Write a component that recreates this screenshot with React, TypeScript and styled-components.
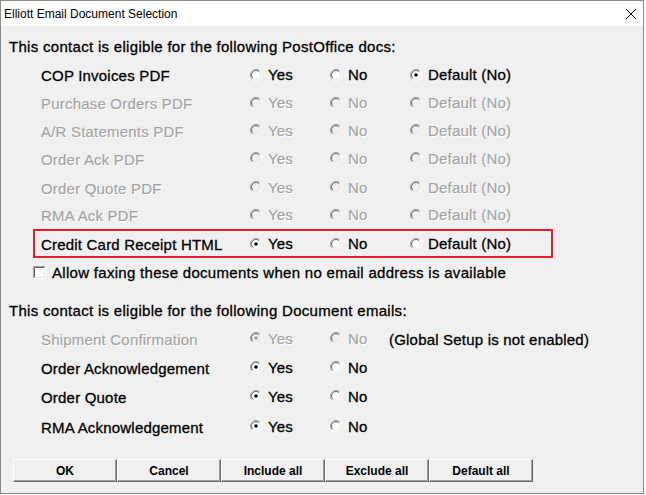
import React from 'react'
import styled, { createGlobalStyle } from 'styled-components'

const GlobalStyle = createGlobalStyle`
  html, body { margin: 0; padding: 0; background: #fff; }
  body { font-family: 'Liberation Sans', Arial, sans-serif; }
`

const Window = styled.div`
  width: 644px;
  height: 494px;
  box-sizing: border-box;
  border: 1px solid #8a8a8a;
  background: #f0f0f0;
  display: flex;
  flex-direction: column;
`

const TitleBar = styled.div`
  height: 25px;
  flex-shrink: 0;
  background: #fff;
  display: flex;
  align-items: center;
  justify-content: space-between;
  padding: 0 7px 0 3px;
  font-size: 12px;
  color: #000;
`

const Body = styled.div`
  padding: 6px 0 0 8px;
  display: flex;
  flex-direction: column;
  font-size: 15px;
  letter-spacing: 0.2px;
  color: #000;
  -webkit-text-stroke: 0.3px;
`

const Heading = styled.div<{ $mt?: number }>`
  height: 28px;
  margin-top: ${p => p.$mt || 0}px;
  display: flex;
  align-items: center;
  letter-spacing: 0.3px;
`

const Section = styled.div`
  margin-left: 24px;
  display: flex;
  flex-direction: column;
`

const Row = styled.div<{ $h: number; $cols: string; $boxed?: boolean }>`
  height: ${p => p.$h}px;
  box-sizing: border-box;
  display: grid;
  grid-template-columns: ${p => p.$cols};
  align-items: center;
  padding-left: ${p => (p.$boxed ? 6 : 8)}px;
  ${p => p.$boxed && `
    width: 520px;
    margin-top: 2px;
    border: 2px solid #ec1c24;
  `}
`

const Label = styled.span<{ $off?: boolean }>`
  padding-top: 2px;
  color: ${p => (p.$off ? '#a3a3a3' : '#000')};
  ${p => p.$off && 'text-shadow: 1px 1px 0 #ffffff; -webkit-text-stroke: 0.15px;'}
`

const Option = styled.span<{ $off?: boolean }>`
  display: inline-flex;
  align-items: center;
  gap: 6px;
  color: ${p => (p.$off ? '#a3a3a3' : '#000')};
  ${p => p.$off && 'text-shadow: 1px 1px 0 #ffffff; -webkit-text-stroke: 0.15px;'}
  svg { flex-shrink: 0; }
`

const Note = styled.span`
  padding-top: 2px;
`

const CheckRow = styled.label`
  height: 28px;
  display: flex;
  align-items: center;
  gap: 6px;
  letter-spacing: 0.3px;
`

const ButtonBar = styled.div`
  margin: 17px 0 0 4px;
  display: flex;
`

const Button = styled.button`
  width: 104px;
  height: 23px;
  box-sizing: border-box;
  padding: 0;
  background: #f0f0f0;
  border: 1px solid;
  border-color: #ffffff #696969 #696969 #ffffff;
  box-shadow: inset -1px -1px 0 #a0a0a0;
  font-family: 'Liberation Sans', Arial, sans-serif;
  font-weight: bold;
  font-size: 12px;
  color: #000;
  -webkit-text-stroke: 0;
  letter-spacing: 0;
`

const Radio: React.FC<{ on?: boolean; off?: boolean }> = ({ on, off }) => (
  <svg width="12" height="12" viewBox="0 0 12 12">
    <circle cx="6" cy="6" r="5.5" fill={off ? '#f0f0f0' : '#ffffff'} />
    <path d="M9.9 2.1 A5.5 5.5 0 0 0 2.1 9.9" fill="none" stroke="#a0a0a0" />
    <path d="M2.1 9.9 A5.5 5.5 0 0 0 9.9 2.1" fill="none" stroke="#ffffff" />
    <path d="M9.2 2.8 A4.5 4.5 0 0 0 2.8 9.2" fill="none" stroke="#6a6a6a" />
    <path d="M2.8 9.2 A4.5 4.5 0 0 0 9.2 2.8" fill="none" stroke="#e3e3e3" />
    {on && <circle cx="6" cy="6" r="1.8" fill={off ? '#a0a0a0' : '#000'} />}
  </svg>
)

const CheckBox = () => (
  <svg width="13" height="13" viewBox="0 0 13 13">
    <rect x="0" y="0" width="13" height="13" fill="#ffffff" />
    <path d="M0.5 12.5 V0.5 H12.5" fill="none" stroke="#a0a0a0" />
    <path d="M1.5 11.5 V1.5 H11.5" fill="none" stroke="#696969" />
    <path d="M0.5 12.5 H12.5 V0.5" fill="none" stroke="#ffffff" />
    <path d="M1.5 11.5 H11.5 V1.5" fill="none" stroke="#e3e3e3" />
  </svg>
)

const CloseIcon = () => (
  <svg width="10" height="10" viewBox="0 0 10 10">
    <path d="M0 0 L10 10 M10 0 L0 10" stroke="#000" strokeWidth="1" />
  </svg>
)

const postCols = '209px 80px 80px auto'
const docCols = '209px 80px 59px auto'

const postDocs = [
  { name: 'COP Invoices PDF', h: 29, pick: 2, off: false },
  { name: 'Purchase Orders PDF', h: 27, pick: -1, off: true },
  { name: 'A/R Statements PDF', h: 28, pick: -1, off: true },
  { name: 'Order Ack PDF', h: 28, pick: -1, off: true },
  { name: 'Order Quote PDF', h: 30, pick: -1, off: true },
  { name: 'RMA Ack PDF', h: 25, pick: -1, off: true },
]

const docEmails = [
  { name: 'Shipment Confirmation', h: 28, off: true, note: '(Global Setup is not enabled)' },
  { name: 'Order Acknowledgement', h: 30, off: false, note: '' },
  { name: 'Order Quote', h: 28, off: false, note: '' },
  { name: 'RMA Acknowledgement', h: 32, off: false, note: '' },
]

const choices = ['Yes', 'No', 'Default (No)']

export default function App() {
  return (
    <>
      <GlobalStyle />
      <Window>
        <TitleBar>
          <span>Elliott Email Document Selection</span>
          <CloseIcon />
        </TitleBar>
        <Body>
          <Heading>This contact is eligible for the following PostOffice docs:</Heading>
          <Section>
            {postDocs.map(d => (
              <Row key={d.name} $h={d.h} $cols={postCols}>
                <Label $off={d.off}>{d.name}</Label>
                {choices.map((c, i) => (
                  <Option key={c} $off={d.off}>
                    <Radio on={d.pick === i} off={d.off} />
                    {c}
                  </Option>
                ))}
              </Row>
            ))}
            <Row $h={29} $cols={postCols} $boxed>
              <Label>Credit Card Receipt HTML</Label>
              {choices.map((c, i) => (
                <Option key={c}>
                  <Radio on={i === 0} />
                  {c}
                </Option>
              ))}
            </Row>
            <CheckRow>
              <CheckBox />
              <span>Allow faxing these documents when no email address is available</span>
            </CheckRow>
          </Section>
          <Heading $mt={10}>This contact is eligible for the following Document emails:</Heading>
          <Section>
            {docEmails.map(d => (
              <Row key={d.name} $h={d.h} $cols={docCols}>
                <Label $off={d.off}>{d.name}</Label>
                <Option $off={d.off}>
                  <Radio on off={d.off} />
                  Yes
                </Option>
                <Option $off={d.off}>
                  <Radio off={d.off} />
                  No
                </Option>
                <Note>{d.note}</Note>
              </Row>
            ))}
          </Section>
          <ButtonBar>
            <Button>OK</Button>
            <Button>Cancel</Button>
            <Button>Include all</Button>
            <Button>Exclude all</Button>
            <Button>Default all</Button>
          </ButtonBar>
        </Body>
      </Window>
    </>
  )
}
